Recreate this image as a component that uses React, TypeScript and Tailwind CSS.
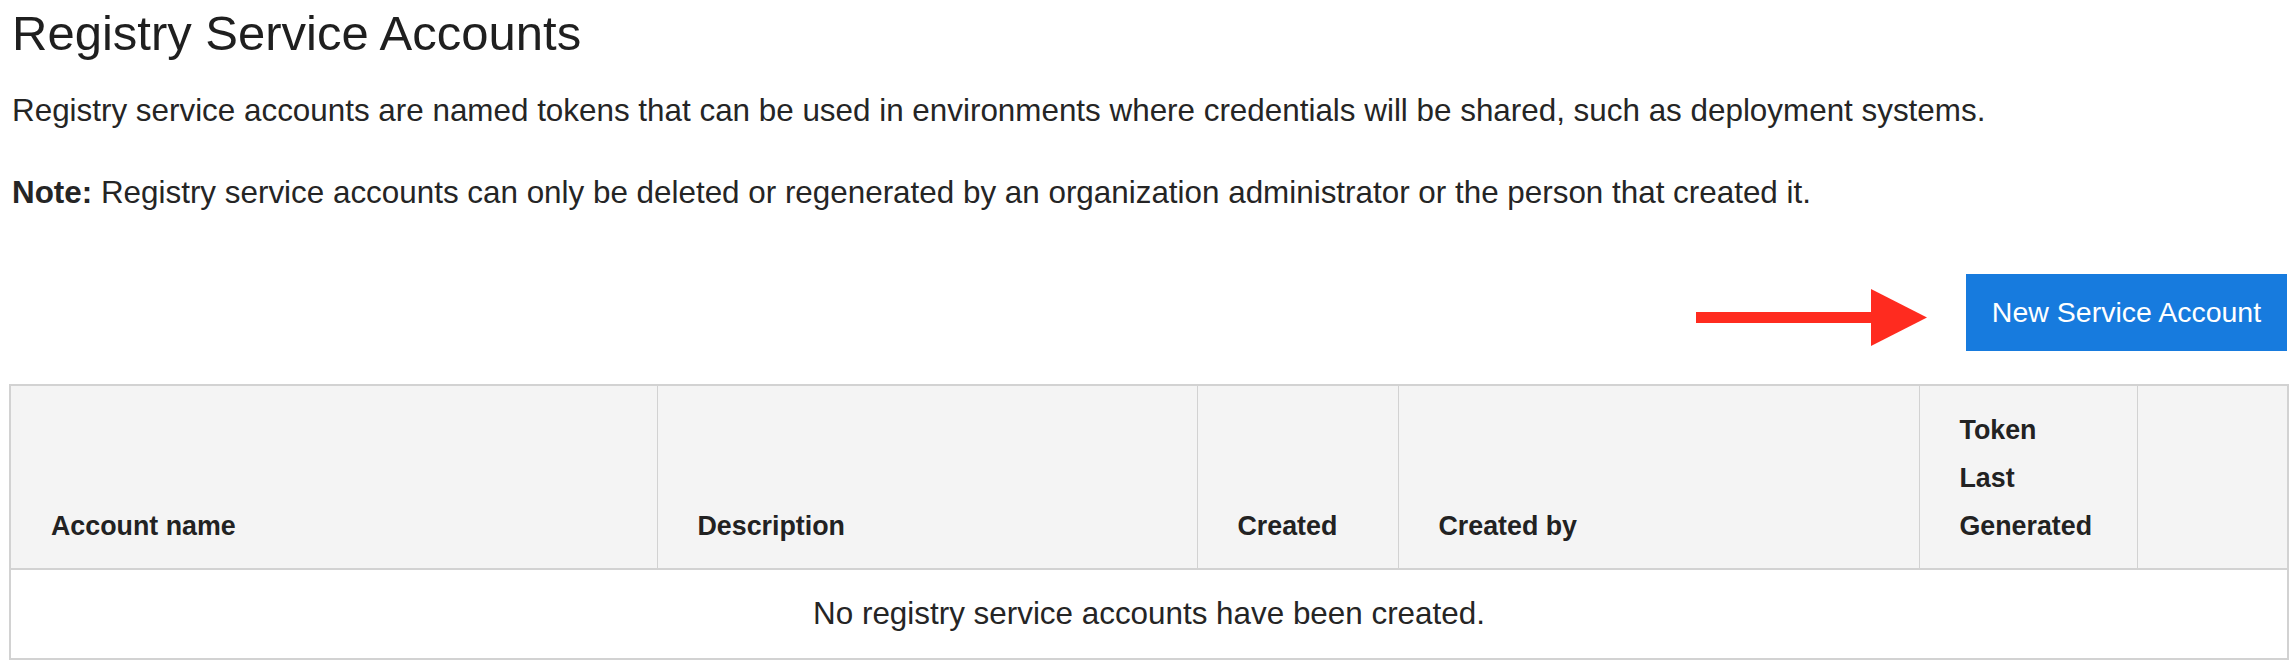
import React from "react";

export default function App() {
  const cols = [
    { label: ["Account name"], w: "w-[647px]" },
    { label: ["Description"], w: "w-[540px]" },
    { label: ["Created"], w: "w-[201px]" },
    { label: ["Created by"], w: "w-[521px]" },
    { label: ["Token", "Last", "Generated"], w: "w-[218px]" },
    { label: [], w: "w-[151px]" },
  ];
  return (
    <div className="w-[2296px] h-[670px] bg-white text-[#252525] font-['Liberation_Sans',Arial,sans-serif] overflow-hidden">
      <div className="pl-[12px] pr-[9px]">
        <h1 className="mt-[4px] text-[49px] leading-[58px] text-[#1f1f1f]">Registry Service Accounts</h1>
        <p className="mt-[26px] text-[31.4px] leading-[45px]">
          Registry service accounts are named tokens that can be used in environments where credentials will be shared, such as deployment systems.
        </p>
        <p className="mt-[37px] text-[31.4px] leading-[45px]">
          <span className="font-bold">Note:</span> Registry service accounts can only be deleted or regenerated by an organization administrator or the person that created it.
        </p>
        <div className="mt-[59px] flex justify-end items-center">
          <svg width="231" height="57" viewBox="0 0 231 57" className="mr-[39px] mt-[10px]">
            <rect x="0" y="23" width="177" height="11" fill="#ff2b1f" />
            <polygon points="175,0 231,28.5 175,57" fill="#ff2b1f" />
          </svg>
          <button className="w-[321px] h-[77px] bg-[#177bde] text-white text-[28.5px] flex items-center justify-center">
            New Service Account
          </button>
        </div>
      </div>
      <table className="ml-[9px] mt-[33px] w-[2278px] border-collapse border-2 border-[#d2d2d2] table-fixed">
        <thead>
          <tr className="bg-[#f4f4f4]">
            {cols.map((c, i) => (
              <th
                key={i}
                className={`${c.w} align-bottom text-left font-bold text-[26.8px] leading-[48px] text-[#222] pl-[40px] pr-[40px] pt-[20px] pb-[18px] border-x border-b-2 border-[#d2d2d2]`}
              >
                {c.label.map((l, j) => (
                  <div key={j}>{l}</div>
                ))}
              </th>
            ))}
          </tr>
        </thead>
        <tbody>
          <tr>
            <td colSpan={6} className="h-[90px] text-center text-[31.4px] text-[#252525]">
              No registry service accounts have been created.
            </td>
          </tr>
        </tbody>
      </table>
    </div>
  );
}
